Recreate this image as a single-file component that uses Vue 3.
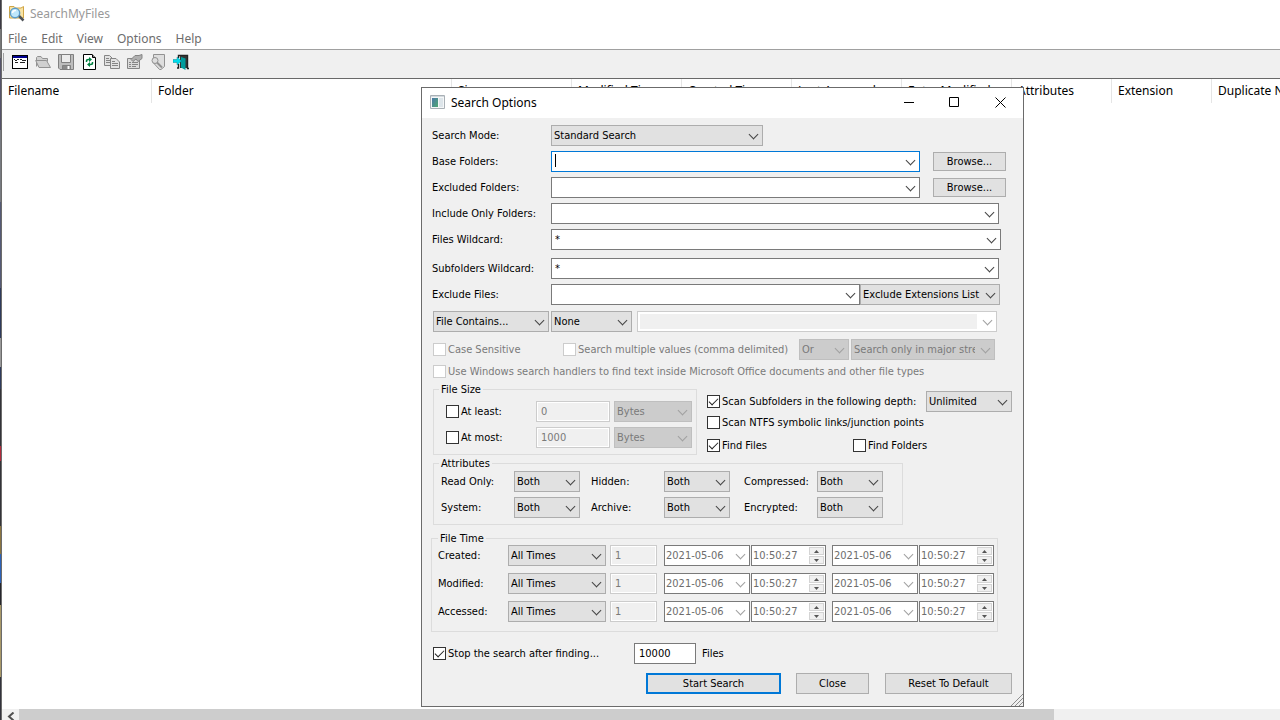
<template>
  <div class="desktop">
    <div class="main-window">
      <header class="main-title">
        <svg class="app-icon" width="17" height="17" viewBox="0 0 17 17">
          <path d="M1.500 13V1.500H6L7.500 3H13L15.500 1.500V13Z" fill="#f8e3a4" stroke="#d0a545" />
          <path d="M10.500 10.500 15.500 15.500" stroke="#4e5357" stroke-width="2.500" />
          <circle cx="7" cy="8" r="4.700" fill="#bfe7fb" stroke="#5b9cc9" stroke-width="1.400" />
          <path d="M4.500 8Q5 5 8 5.500" fill="none" stroke="#fff" stroke-width="1.500" />
        </svg>
        <span>SearchMyFiles</span>
      </header>
      <nav class="menu">
        <a v-for="item in menus" :key="item" href="#">{{ item }}</a>
      </nav>
      <div class="toolbar">
        <button aria-label="Search options">
          <svg width="16" height="16" viewBox="0 0 16 16" shape-rendering="crispEdges">
            <path d="M0 1h16v14H0Z" fill="#000" />
            <path d="M1 4h14v10H1Z" fill="#fff" />
            <path d="M1 2h14v2H1Z" fill="#000090" />
            <path d="M2 5h1v1H2ZM3 6h2v1H3ZM5 5h2v1H5ZM8 5h2v1H8ZM10 6h4v1h-4ZM3 8h3v1H3ZM8 8h5v1H8Z" fill="#222" />
          </svg>
        </button>
        <button aria-label="Open" disabled>
          <svg width="16" height="16" viewBox="0 0 16 16" fill="#d0d0d0" stroke="#929292">
            <path d="M1.500 12.500V3.500L2.500 2.500H6L7.500 4.500H12.500V7.500" />
            <path d="M.7 6.500H11.500L15.500 13.500H4Z" />
          </svg>
        </button>
        <button aria-label="Save" disabled>
          <svg width="16" height="16" viewBox="0 0 16 16" fill="#bdbdbd" stroke="#808080">
            <path d="M.5.5H15.500V15.500H2L.5 14Z" />
            <path d="M3.500.5H12.500V8.500H3.500Z" fill="#ececec" />
            <path d="M4.500 11.500H12.500V15.500H4.500Z" fill="#8a8a8a" />
            <path d="M10.500 12V15" stroke="#fff" stroke-width="2" />
          </svg>
        </button>
        <button aria-label="Refresh">
          <svg width="16" height="16" viewBox="0 0 16 16">
            <path d="M2.500.5H11L14.500 4V15.500H2.500Z" fill="#fff" stroke="#000" />
            <path d="M11.500.5V3.500H14.500" fill="none" stroke="#000" />
            <path d="M5.500 8V7Q5.500 5.500 7.500 5.500H8.500M11.500 8V9Q11.500 10.500 9.500 10.500H8.500" fill="none" stroke="#008040" stroke-width="1.500" />
            <path d="M8 3 11 5.500 8 8ZM9 8 6 10.500 9 13Z" fill="#008040" />
          </svg>
        </button>
        <button aria-label="Copy" disabled>
          <svg width="16" height="16" viewBox="0 0 16 16" fill="#e2e2e2" stroke="#858585">
            <path d="M.5 1.500H5.500L8.500 4.500V11.500H.5Z" />
            <path d="M2 4.500H5M2 6.500H6M2 8.500H6" />
            <path d="M6.500 4.500H12L15.500 8V14.500H6.500Z" />
            <path d="M8 7.500H11M8 9.500H14M8 11.500H14" />
          </svg>
        </button>
        <button aria-label="Properties" disabled>
          <svg width="16" height="16" viewBox="0 0 16 16" fill="#dadada" stroke="#858585">
            <path d="M.5 4.500H12.500V14.500H.5Z" />
            <path d="M2 8.500H4M5 8.500H11M2 10.500H4M5 10.500H11M2 12.500H4M5 12.500H9" />
            <path d="M4 5.500 8 1.500H12L15 .5V4.500L11 7.500 9 5 6 7.500Z" fill="#b0b0b0" />
          </svg>
        </button>
        <button aria-label="Find" disabled>
          <svg width="16" height="16" viewBox="0 0 16 16" fill="#dedede" stroke="#929292">
            <path d="M3.500.5H14.500V12.500L11 15.500H9.500L3.500 9Z" />
            <circle cx="5" cy="6.500" r="3" />
            <path d="M7 8.500 12 13.500" stroke-width="2" />
          </svg>
        </button>
        <button aria-label="Exit">
          <svg width="16" height="16" viewBox="0 0 16 16">
            <path d="M5.500 4V1.500H14.500V14.500H16M5.500 10V14H4" fill="none" stroke="#222" stroke-width="1.400" />
            <path d="M7 2H14V14H7Z" fill="#333" />
            <path d="M8 3 12.500 4.500V16L8 13.500Z" fill="#009c9c" />
            <path d="M0 5.500H4V3L8.500 7 4 11V8.500H0Z" fill="#00dcec" stroke="#00707c" stroke-width=".4" />
          </svg>
        </button>
      </div>
      <div class="list">
        <table>
          <thead>
            <tr>
              <th v-for="col in columns" :key="col.name" :style="{ width: col.width + 'px' }">
                {{ col.name }}
              </th>
            </tr>
          </thead>
        </table>
      </div>
      <div class="scrollbar">
        <button aria-label="Scroll left">
          <svg width="8" height="9" viewBox="0 0 8 9"><path d="M6.500 .5 2 4.500 6.500 8.500" fill="none" stroke="#505050" stroke-width="2" /></svg>
        </button>
        <div class="thumb"></div>
      </div>
    </div>

    <form class="dialog" @submit.prevent>
      <header class="dialog-title">
        <svg width="15" height="14" viewBox="0 0 15 14">
          <defs>
            <linearGradient id="pane" x1="0" y1="0" x2="1" y2="1">
              <stop offset="0" stop-color="#4b78a8" />
              <stop offset="1" stop-color="#4fa873" />
            </linearGradient>
          </defs>
          <path d="M.5.5H14.500V13.500H.5Z" fill="#f5f7f8" stroke="#a9b0b6" />
          <path d="M1 1H14V2H1Z" fill="#d4dade" />
          <path d="M2 3H8V12H2Z" fill="url(#pane)" />
          <path d="M9 3H13V12H9Z" fill="#dde5ea" />
        </svg>
        <h1>Search Options</h1>
        <button type="button" aria-label="Minimize">
          <svg width="11" height="11" viewBox="0 0 11 11"><path d="M1 5.500H11" stroke="#000" /></svg>
        </button>
        <button type="button" aria-label="Maximize">
          <svg width="11" height="11" viewBox="0 0 11 11"><path d="M.5.5H9.500V9.500H.5Z" fill="none" stroke="#000" /></svg>
        </button>
        <button type="button" aria-label="Close window">
          <svg width="11" height="11" viewBox="0 0 11 11"><path d="M.5.5 10.500 10.500M10.500.5.5 10.500" stroke="#000" /></svg>
        </button>
      </header>

      <div class="dialog-body">
        <div class="rows">
          <div class="row">
            <label class="name" for="mode">Search Mode:</label>
            <span class="pick w-mode"><select id="mode"><option>Standard Search</option></select></span>
          </div>
          <div class="row">
            <label class="name" for="base">Base Folders:</label>
            <span class="pick combo active w-folder"><input id="base" v-model="form.base" type="text" /></span>
            <button class="btn browse" type="button">Browse...</button>
          </div>
          <div class="row">
            <label class="name" for="excluded">Excluded Folders:</label>
            <span class="pick combo w-folder"><input id="excluded" v-model="form.excluded" type="text" /></span>
            <button class="btn browse" type="button">Browse...</button>
          </div>
          <div class="row">
            <label class="name" for="include">Include Only Folders:</label>
            <span class="pick combo w-full"><input id="include" v-model="form.include" type="text" /></span>
          </div>
          <div class="row">
            <label class="name" for="files">Files Wildcard:</label>
            <span class="pick combo w-files"><input id="files" v-model="form.files" type="text" /></span>
          </div>
        </div>

        <div class="rows wildcards">
          <div class="row">
            <label class="name" for="subfolders">Subfolders Wildcard:</label>
            <span class="pick combo w-full"><input id="subfolders" v-model="form.subfolders" type="text" /></span>
          </div>
          <div class="row">
            <label class="name" for="exclude">Exclude Files:</label>
            <span class="pick combo w-exclude"><input id="exclude" v-model="form.exclude" type="text" /></span>
            <span class="pick w-list"><select aria-label="Exclude mode"><option>Exclude Extensions List</option></select></span>
          </div>
        </div>

        <div class="row contains">
          <span class="pick w-contains"><select aria-label="Contains mode"><option>File Contains...</option></select></span>
          <span class="pick w-none"><select aria-label="Contains type"><option>None</option></select></span>
          <span class="pick combo disabled w-text"><input type="text" aria-label="Contained text" disabled /></span>
        </div>

        <div class="row multi">
          <label class="check case"><input type="checkbox" disabled />Case Sensitive</label>
          <label class="check values"><input type="checkbox" disabled />Search multiple values (comma delimited)</label>
          <span class="pick disabled w-or"><select aria-label="Operator" disabled><option>Or</option></select></span>
          <span class="pick disabled w-stream"><select aria-label="Streams" disabled><option>Search only in major stream</option></select></span>
        </div>
        <div class="row handlers">
          <label class="check">
            <input type="checkbox" disabled />Use Windows search handlers to find text inside Microsoft Office documents and other file types
          </label>
        </div>

        <div class="middle">
          <fieldset class="size">
            <legend>File Size</legend>
            <div v-for="s in sizes" :key="s.label" class="row">
              <label class="check"><input v-model="s.on" type="checkbox" />{{ s.label }}</label>
              <input v-model="s.value" class="box w-size" type="text" :aria-label="s.label + ' size'" disabled />
              <span class="pick disabled w-unit"><select :aria-label="s.label + ' unit'" disabled><option>Bytes</option></select></span>
            </div>
          </fieldset>
          <div class="scan">
            <div class="row">
              <label class="check"><input v-model="form.scan" type="checkbox" />Scan Subfolders in the following depth:</label>
              <span class="pick w-depth"><select aria-label="Depth"><option>Unlimited</option></select></span>
            </div>
            <label class="check"><input v-model="form.links" type="checkbox" />Scan NTFS symbolic links/junction points</label>
            <div class="find">
              <label class="check"><input v-model="form.findFiles" type="checkbox" />Find Files</label>
              <label class="check"><input v-model="form.findFolders" type="checkbox" />Find Folders</label>
            </div>
          </div>
        </div>

        <fieldset class="attributes">
          <legend>Attributes</legend>
          <div class="attr-grid">
            <template v-for="attr in attributes" :key="attr">
              <label :for="'attr-' + attr">{{ attr }}:</label>
              <span class="pick w-attr"><select :id="'attr-' + attr"><option>Both</option></select></span>
            </template>
          </div>
        </fieldset>

        <fieldset class="times">
          <legend>File Time</legend>
          <div v-for="time in times" :key="time" class="row">
            <label :for="'time-' + time">{{ time }}:</label>
            <span class="pick w-time"><select :id="'time-' + time"><option>All Times</option></select></span>
            <input class="box w-count" type="text" value="1" :aria-label="time + ' count'" disabled />
            <div v-for="end in ['from', 'to']" :key="end" class="stamp">
              <span class="pick combo date"><input type="text" value="2021-05-06" :aria-label="time + ' date ' + end" disabled /></span>
              <span class="clock">
                <input type="text" value="10:50:27" :aria-label="time + ' time ' + end" disabled />
                <span class="spin">
                  <button type="button" aria-label="Up" disabled><svg width="5" height="3" viewBox="0 0 5 3"><path d="M0 3 2.500 0 5 3Z" /></svg></button>
                  <button type="button" aria-label="Down" disabled><svg width="5" height="3" viewBox="0 0 5 3"><path d="M0 0 2.500 3 5 0Z" /></svg></button>
                </span>
              </span>
            </div>
          </div>
        </fieldset>

        <div class="row stop">
          <label class="check"><input v-model="form.stop" type="checkbox" />Stop the search after finding...</label>
          <input id="limit" v-model="form.limit" class="box w-limit" type="text" />
          <label for="limit">Files</label>
        </div>

        <footer class="actions">
          <button class="btn default" type="submit">Start Search</button>
          <button class="btn close" type="button">Close</button>
          <button class="btn reset" type="button">Reset To Default</button>
        </footer>
      </div>
      <svg class="grip" width="12" height="12" viewBox="0 0 12 12"><path d="M0 12 12 0M4 12 12 4M8 12 12 8" stroke="#8c8c8c" /></svg>
    </form>
  </div>
</template>

<script setup>
import { reactive } from 'vue'

const menus = ['File', 'Edit', 'View', 'Options', 'Help']

const columns = [
  { name: 'Filename', width: 150 },
  { name: 'Folder', width: 300 },
  { name: 'Size', width: 120 },
  { name: 'Modified Time', width: 110 },
  { name: 'Created Time', width: 110 },
  { name: 'Last Accessed', width: 110 },
  { name: 'Entry Modified', width: 110 },
  { name: 'Attributes', width: 100 },
  { name: 'Extension', width: 100 },
  { name: 'Duplicate Number', width: 120 },
]

const form = reactive({
  base: '',
  excluded: '',
  include: '',
  files: '*',
  subfolders: '*',
  exclude: '',
  scan: true,
  links: false,
  findFiles: true,
  findFolders: false,
  stop: true,
  limit: '10000',
})

const sizes = reactive([
  { label: 'At least:', on: false, value: '0' },
  { label: 'At most:', on: false, value: '1000' },
])

const attributes = ['Read Only', 'Hidden', 'Compressed', 'System', 'Archive', 'Encrypted']
const times = ['Created', 'Modified', 'Accessed']
</script>

<style>
body {
  margin: 0;
  background: #fff;
}
</style>

<style scoped>
* {
  box-sizing: border-box;
}
.desktop {
  position: relative;
  height: 100vh;
  padding-left: 1px;
  overflow: hidden;
  /* sliver of wallpaper and icons left of the window */
  background: linear-gradient(
    #3c3a44 0 4%,
    #777 4% 8%,
    #55536a 8% 18%,
    #777a80 18% 28%,
    #555a75 28% 40%,
    #2e3a5c 40% 47%,
    #999 47% 51%,
    #2e3a5c 51% 54%,
    #333338 54% 62%,
    #b02a3c 62% 64%,
    #333338 64% 73%,
    #8a7440 73% 77%,
    #2c62b8 77% 81%,
    #26262c 81% 84%,
    #a89868 84% 94%,
    #33333c 94%
  );
  font-family: 'Noto Sans', sans-serif;
  font-size: 12px;
  color: #000;
}
button,
input,
select {
  margin: 0;
  font: inherit;
  color: inherit;
}
svg {
  display: block;
}

/* main window */
.main-window {
  display: flex;
  flex-direction: column;
  height: 100%;
  border-left: 1px solid #6b6b6b;
  background: #fff;
}
.main-title {
  display: flex;
  align-items: center;
  gap: 5px;
  height: 27px;
  padding-left: 6px;
  color: #999;
}
.menu {
  display: flex;
  align-items: center;
  gap: 14px;
  height: 22px;
  padding-left: 6px;
}
.menu a {
  color: #6d6d6d;
  text-decoration: none;
}
.toolbar {
  display: flex;
  align-items: center;
  height: 30px;
  padding: 0 0 4px 1px;
  border-top: 1px solid #a0a0a0;
  border-bottom: 1px solid #696969;
  background: #f0f0f0;
}
.toolbar::before {
  content: '';
  width: 1px;
  height: 18px;
  margin-right: 4px;
  background: #a0a0a0;
}
.toolbar button {
  display: flex;
  align-items: center;
  justify-content: center;
  width: 23px;
  height: 22px;
  padding: 0;
  border: 0;
  background: none;
}
.list {
  flex: 1;
  overflow: hidden;
}
.list table {
  table-layout: fixed;
  width: 1330px;
  border-collapse: separate;
  border-spacing: 0;
}
.list th {
  height: 24px;
  padding: 0 6px 2px;
  border-right: 1px solid #e5e5e5;
  font-weight: normal;
  text-align: left;
  white-space: nowrap;
}
.scrollbar {
  display: flex;
  height: 11px;
  background: #f0f0f0;
}
.scrollbar button {
  width: 17px;
  padding: 3px 0 0 5px;
  border: 0;
  background: none;
  overflow: hidden;
}
.thumb {
  width: 81%;
  background: #cdcdcd;
}

/* dialog */
.dialog {
  position: absolute;
  left: 421px;
  top: 87px;
  width: 603px;
  border: 1px solid #6b6b6b;
  background: #f0f0f0;
  font-family: 'DejaVu Sans Condensed', 'DejaVu Sans', sans-serif;
  font-size: 11px;
  line-height: 13px;
}
.dialog-title {
  display: flex;
  align-items: center;
  height: 30px;
  padding: 0 0 2px 8px;
  background: #fff;
}
.dialog-title h1 {
  flex: 1;
  margin: 0 0 0 6px;
  font: 12px 'Noto Sans', sans-serif;
}
.dialog-title button {
  display: flex;
  align-items: center;
  justify-content: center;
  width: 46px;
  height: 100%;
  padding: 0;
  border: 0;
  background: none;
}
.dialog-body {
  padding: 7px 11px 12px 10px;
  white-space: nowrap;
}
.rows {
  display: flex;
  flex-direction: column;
  gap: 5px;
}
.row {
  display: flex;
  align-items: center;
  min-height: 21px;
}
.name {
  width: 119px;
}
.pick {
  position: relative;
  display: block;
  flex: none;
  height: 21px;
}
.pick::after {
  content: '';
  position: absolute;
  right: 6px;
  top: 6px;
  width: 6px;
  height: 6px;
  border: solid #444;
  border-width: 0 1px 1px 0;
  transform: rotate(45deg);
  pointer-events: none;
}
.pick select,
.pick input {
  display: block;
  width: 100%;
  height: 100%;
  padding: 0 20px 0 3px;
  border: 1px solid #adadad;
  border-radius: 0;
  outline: 0;
  appearance: none;
  background: #e1e1e1;
  line-height: 13px;
}
.pick select {
  padding: 0 19px 0 2px;
}
.combo input {
  border-color: #7a7a7a;
  background: #fff;
}
.combo.active input {
  border-color: #0078d7;
}
.combo.active::before {
  content: '';
  position: absolute;
  left: 4px;
  top: 3px;
  width: 1px;
  height: 13px;
  background: #000;
}
.pick.disabled::after,
.date::after {
  border-color: #a0a0a0;
}
.disabled select {
  border-color: #bfbfbf;
  background: #ccc;
  color: #7a7a7a;
  opacity: 1;
}
.disabled.combo input {
  border-color: #ccc;
  background: linear-gradient(#f0f0f0, #f0f0f0) 2px 2px / calc(100% - 21px) calc(100% - 4px) no-repeat #fff;
}
.w-mode {
  width: 212px;
}
.w-folder {
  width: 369px;
}
.w-full {
  width: 448px;
}
.w-files {
  width: 450px;
}
.w-exclude {
  width: 309px;
}
.w-list {
  width: 140px;
}
.w-contains {
  width: 116px;
}
.w-none {
  width: 81px;
}
.w-text {
  width: 360px;
  margin-left: 3px;
}
.w-or {
  width: 50px;
}
.w-stream {
  width: 144px;
}
.btn {
  height: 21px;
  padding: 0;
  border: 1px solid #adadad;
  background: #e1e1e1;
}
.browse {
  width: 73px;
  height: 19px;
  margin-left: 13px;
}
.wildcards {
  margin-top: 8px;
}
.contains {
  gap: 2px;
  margin-top: 6px;
  padding-left: 1px;
}
.check {
  display: flex;
  align-items: center;
  gap: 2px;
}
.check input {
  display: grid;
  place-content: center;
  width: 13px;
  height: 13px;
  border: 1px solid #333;
  appearance: none;
  background: #fff;
}
.check input:checked::after {
  content: '';
  width: 8px;
  height: 4px;
  margin-bottom: 2px;
  border: solid #222;
  border-width: 0 0 1px 1px;
  transform: rotate(-45deg);
}
.check input:disabled {
  border-color: #ccc;
}
.check:has(input:disabled) {
  color: #7a7a7a;
}
.multi {
  gap: 2px;
  margin-top: 7px;
  padding-left: 1px;
}
.case {
  width: 128px;
}
.values {
  width: 234px;
}
.row.handlers {
  min-height: 14px;
  margin-top: 4px;
  padding-left: 1px;
}
.middle {
  display: flex;
  gap: 10px;
  margin-top: 5px;
  padding-left: 1px;
}
fieldset {
  min-width: 0;
  margin: 0;
  border: 1px solid #dcdcdc;
}
legend {
  height: 13px;
  padding: 0 2px;
}
.size {
  width: 264px;
  padding: 5px 4px 6px 5px;
}
.size .row + .row {
  margin-top: 5px;
}
.size .check {
  width: 97px;
  padding-left: 7px;
}
.box {
  height: 21px;
  padding: 0 4px;
  border: 1px solid #7a7a7a;
  outline: 0;
  background: #fff;
}
.box:disabled {
  border-color: #ccc;
  background: #f0f0f0;
  box-shadow: inset 0 0 0 1px #fff;
  color: #7a7a7a;
}
.w-size {
  width: 74px;
}
.w-unit {
  width: 78px;
  margin-left: 4px;
}
.scan {
  flex: 1;
  padding-top: 8px;
}
.scan .row {
  justify-content: space-between;
}
.w-depth {
  width: 86px;
}
.scan > .check {
  margin-top: 4px;
}
.find {
  display: grid;
  grid-template-columns: 146px auto;
  margin-top: 10px;
}
.attributes {
  width: 470px;
  margin: 2px 0 0 1px;
  padding: 1px 5px 6px;
}
.attr-grid {
  display: grid;
  grid-template-columns: 73px 77px 73px 80px 73px 66px;
  row-gap: 5px;
  align-items: center;
  padding-left: 2px;
}
.w-attr {
  width: 66px;
}
.times {
  width: 567px;
  margin: 7px 0 0 -1px;
  padding: 0 3px 9px 6px;
}
.times .row + .row {
  margin-top: 7px;
}
.times label {
  width: 70px;
}
.w-time {
  width: 98px;
}
.w-count {
  width: 47px;
  margin: 0 1px 0 4px;
}
.stamp {
  display: flex;
  gap: 1px;
  margin-left: 6px;
  color: #6d6d6d;
}
.date {
  width: 86px;
}
.date input {
  padding: 0 0 0 1px;
}
.clock {
  display: flex;
  width: 75px;
  height: 21px;
  border: 1px solid #7a7a7a;
  background: #fff;
}
.clock input {
  flex: 1;
  min-width: 0;
  padding: 0 0 0 1px;
  border: 0;
  background: none;
}
.spin {
  display: flex;
  flex-direction: column;
  gap: 1px;
  width: 17px;
  padding: 1px;
}
.spin button {
  display: flex;
  flex: 1;
  align-items: center;
  justify-content: center;
  padding: 0;
  border: 1px solid #d4d4d4;
  background: #f0f0f0;
}
.spin path {
  fill: #555;
}
.stop {
  margin-top: 11px;
  padding-left: 1px;
}
.stop .check {
  width: 201px;
}
.w-limit {
  width: 62px;
  margin-right: 6px;
}
.actions {
  display: flex;
  justify-content: flex-end;
  margin-top: 9px;
}
.default {
  width: 135px;
  border: 2px solid #0078d7;
}
.close {
  width: 73px;
  margin: 0 16px 0 15px;
}
.reset {
  width: 127px;
}
.grip {
  position: absolute;
  right: 0;
  bottom: 0;
}
</style>
